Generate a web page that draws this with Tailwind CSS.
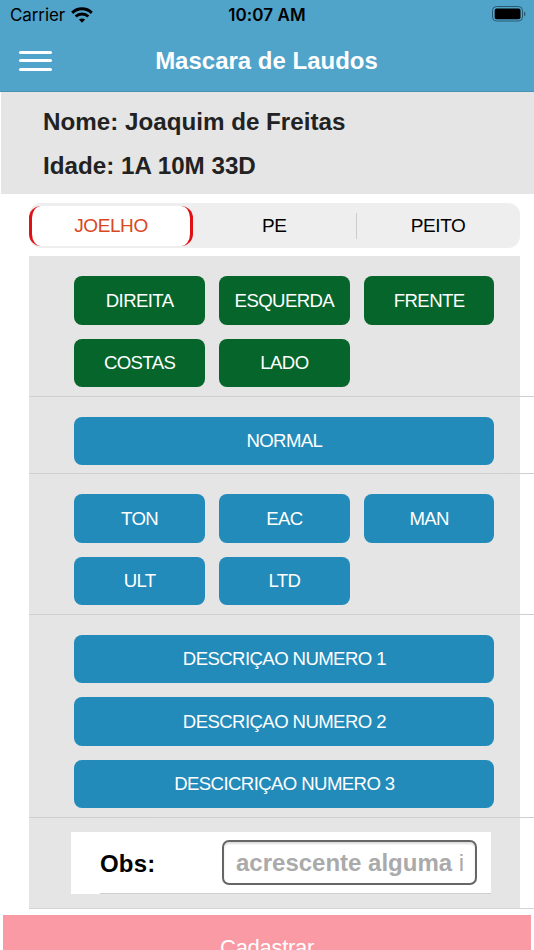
<!DOCTYPE html>
<html lang="pt">
<head>
  <meta charset="UTF-8">
  <title>Mascara de Laudos</title>
  <script src="https://cdn.jsdelivr.net/npm/@tailwindcss/browser@4"></script>
</head>

<body class="bg-white font-['Liberation_Sans',Arial,sans-serif] h-[950px] overflow-hidden">
  <header class="h-[92px] bg-[#50a3c9] border-b border-[#4a8fae]">
    <!-- status bar -->
    <div class="h-[30px] grid grid-cols-3 items-center px-2.5 font-[Inter,sans-serif] text-black">
      <div class="flex items-center gap-[6px]">
        <span class="text-[17px] leading-none -tracking-[0.1px]">Carrier</span>
        <svg class="w-[22px] h-4 -mt-px" viewBox="0 0 22 16" fill="none" stroke="#000" stroke-width="3">
          <path d="M1.2 5.8C6.7 .5 15.3 .5 20.8 5.8" />
          <path d="M4.7 9.5C8.2 6.2 13.8 6.2 17.3 9.5" />
          <path d="M7.9 12.6C9.6 11 12.4 11 14.1 12.6L11 15.8Z" fill="#000" stroke="none" />
        </svg>
      </div>
      <div class="text-center text-[17px] leading-none font-semibold tracking-[0.1px] whitespace-nowrap">10:07 AM</div>
      <svg class="w-[34px] h-4 justify-self-end -mr-[2px] -mt-[2px]" viewBox="0 0 34 16">
        <rect x=".5" y=".5" width="30" height="14.5" rx="4" fill="none" stroke="#2b5a70" />
        <rect x="2.7" y="2.5" width="25.8" height="10.7" rx="2" fill="#000" />
        <path d="M32 5.5C34 6.5 34 9.5 32 10.5Z" fill="#2b5a70" />
      </svg>
    </div>
    <div class="h-[61px] flex items-center">
      <button class="ml-[19px] w-[33px] flex flex-col gap-[5.5px]">
        <span class="h-[3px] w-full rounded-full bg-white"></span>
        <span class="h-[3px] w-full rounded-full bg-white"></span>
        <span class="h-[3px] w-full rounded-full bg-white"></span>
      </button>
      <h1 class="flex-1 mr-[53px] pt-px text-center text-white text-[24px] leading-none font-bold whitespace-nowrap">Mascara de Laudos</h1>
    </div>
  </header>

  <div class="h-[102px] ml-px bg-[#e5e5e5] pl-[42px] pt-2 text-[24.2px] leading-[44px] font-bold text-[#222]">
    <p>Nome: Joaquim de Freitas</p>
    <p>Idade: 1A 10M 33D</p>
  </div>

  <!-- tabs -->
  <div class="mt-[9px] ml-[29px] w-[491px] h-[45px] rounded-[12px] bg-[#eee] grid grid-cols-3 items-center text-center text-[19px] tracking-[-0.4px] leading-none text-black">
    <div class="h-[40px] w-[164px] rounded-[12px] border-x-[3px] border-[#e01014] bg-white text-[#d9481f] flex items-center justify-center">JOELHO</div>
    <div class="h-[26px] w-[164px] flex items-center justify-center border-r border-[#ccc]">PE</div>
    <div>PEITO</div>
  </div>

  <main class="mt-2 ml-[29px] text-[18.6px] tracking-[-0.6px] leading-none text-white">
    <section class="h-[141px] border-b border-[#ccd0d3] bg-linear-to-r from-[#e5e5e5] from-[491px] to-white to-[491px]">
      <div class="ml-[45.4px] w-[420px] pt-5 grid grid-cols-3 gap-x-[14.3px] gap-y-[14px]">
        <button class="h-[48.5px] pt-[2px] rounded-lg bg-[#06652a]">DIREITA</button>
        <button class="h-[48.5px] pt-[2px] rounded-lg bg-[#06652a]">ESQUERDA</button>
        <button class="h-[48.5px] pt-[2px] rounded-lg bg-[#06652a]">FRENTE</button>
        <button class="h-[48.5px] pt-[2px] rounded-lg bg-[#06652a]">COSTAS</button>
        <button class="h-[48.5px] pt-[2px] rounded-lg bg-[#06652a]">LADO</button>
      </div>
    </section>
    <section class="h-[77px] border-b border-[#ccd0d3] bg-linear-to-r from-[#e5e5e5] from-[491px] to-white to-[491px]">
      <div class="ml-[45.4px] w-[420px] pt-[19.5px] grid">
        <button class="h-[48.5px] pt-[2px] rounded-lg bg-[#228bba]">NORMAL</button>
      </div>
    </section>
    <section class="h-[141px] border-b border-[#ccd0d3] bg-linear-to-r from-[#e5e5e5] from-[491px] to-white to-[491px]">
      <div class="ml-[45.4px] w-[420px] pt-5 grid grid-cols-3 gap-x-[14.3px] gap-y-[14px]">
        <button class="h-[48.5px] pt-[2px] rounded-lg bg-[#228bba]">TON</button>
        <button class="h-[48.5px] pt-[2px] rounded-lg bg-[#228bba]">EAC</button>
        <button class="h-[48.5px] pt-[2px] rounded-lg bg-[#228bba]">MAN</button>
        <button class="h-[48.5px] pt-[2px] rounded-lg bg-[#228bba]">ULT</button>
        <button class="h-[48.5px] pt-[2px] rounded-lg bg-[#228bba]">LTD</button>
      </div>
    </section>
    <section class="h-[203px] border-b border-[#ccd0d3] bg-linear-to-r from-[#e5e5e5] from-[491px] to-white to-[491px]">
      <div class="ml-[45.4px] w-[420px] pt-[19.5px] grid gap-[14px]">
        <button class="h-[48.5px] pt-[2px] rounded-lg bg-[#228bba]">DESCRIÇAO NUMERO 1</button>
        <button class="h-[48.5px] pt-[2px] rounded-lg bg-[#228bba]">DESCRIÇAO NUMERO 2</button>
        <button class="h-[48.5px] pt-[2px] rounded-lg bg-[#228bba]">DESCICRIÇAO NUMERO 3</button>
      </div>
    </section>
    <section class="h-[91px] pt-[14px] border-b border-[#d4d4d8] bg-linear-to-r from-[#e5e5e5] from-[491px] to-white to-[491px]">
      <div class="ml-[42px] w-[420px] h-[62px] bg-white pl-[29px] text-[24px] tracking-normal font-bold">
        <div class="h-full flex items-center border-b border-[#ccd0d3] text-black">
          <label class="w-[122px] pt-[3px] tracking-[0.2px]">Obs:</label>
          <div class="w-[255px] h-[45px] rounded-[7px] border-2 border-[#666] shadow-[inset_0_2px_2px_#ddd] px-[12px] flex items-center">
            <span class="w-[228px] h-[34px] leading-[34px] overflow-hidden whitespace-nowrap text-[#aaa]">acrescente alguma <span class="font-normal">i</span></span>
          </div>
        </div>
      </div>
    </section>
  </main>

  <button class="mt-1.5 ml-[3px] w-[528px] h-[66px] bg-[#f99aa5] text-[22px] tracking-[-0.3px] leading-none text-white">Cadastrar</button>
</body>
</html>
